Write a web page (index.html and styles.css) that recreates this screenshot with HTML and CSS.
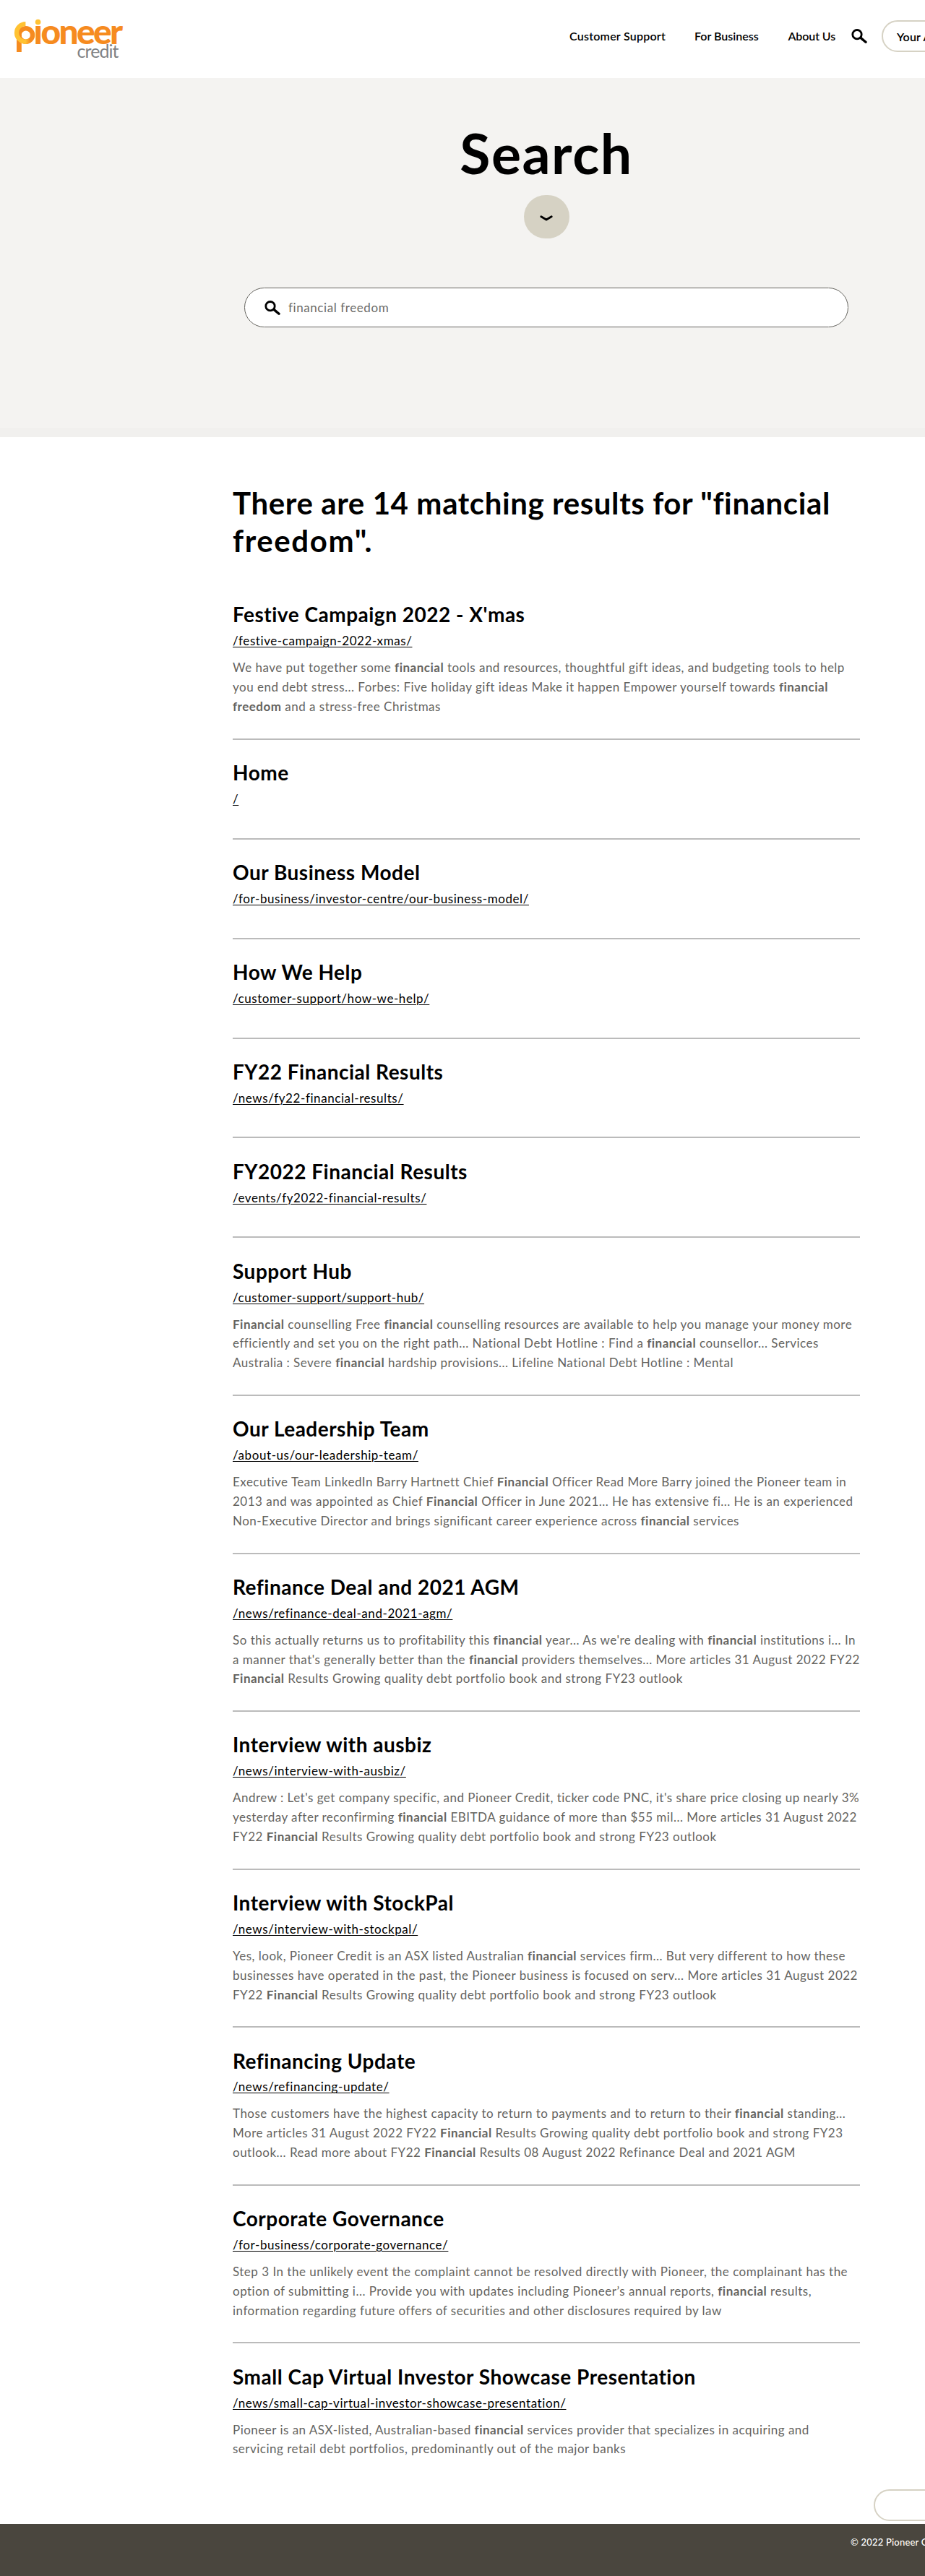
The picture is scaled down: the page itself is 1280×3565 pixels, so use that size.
FILE: index.html
```html
<!DOCTYPE html>
<html lang="en">
<head>
<meta charset="utf-8">
<title>Search - Pioneer Credit</title>
<link rel="stylesheet" href="styles.css">
</head>
<body>
<svg class="sprite" aria-hidden="true">
  <symbol id="magnifier" viewBox="0 0 22 20">
    <circle cx="8" cy="7.7" r="6.2" fill="none" stroke="#000" stroke-width="2.8"/>
    <path d="M13 12.4 L20 18.2" fill="none" stroke="#000" stroke-width="3.4" stroke-linecap="round"/>
  </symbol>
</svg>
<div class="page">
  <header class="header">
    <a class="logo" aria-label="Pioneer Credit">
      <svg width="152" height="56" viewBox="19 26 152 56">
        <defs><linearGradient id="fade" x1="20" x2="42" y1="0" y2="0" gradientUnits="userSpaceOnUse"><stop offset=".7" stop-color="#ffc233"/><stop offset="1" stop-color="#f68b1f"/></linearGradient></defs>
        <rect x="23" y="48" width="6.8" height="24" fill="#f68b1f"/>
        <circle cx="35.8" cy="48.5" r="9.3" fill="none" stroke="#f68b1f" stroke-width="6.4"/>
        <path d="M35.4 33 A12.4 12.4 0 0 0 35.4 57.8 Q38.5 57.8 41 56.2" fill="none" stroke="url(#fade)" stroke-width="6.2"/>
        <text class="logo-name" x="46.6" y="60.6" textLength="123.6">ıoneer</text>
        <circle cx="52.6" cy="30.5" r="3.8" fill="#ffc233"/>
        <text class="logo-sub" x="106.5" y="79.6" textLength="58">credit</text>
      </svg>
    </a>
    <nav class="nav">
      <a>Customer Support</a>
      <a>For Business</a>
      <a>About Us</a>
    </nav>
    <svg class="icon nav-icon"><use href="#magnifier"/></svg>
    <a class="pill account">Your Account</a>
  </header>

  <section class="hero">
    <h1>Search</h1>
    <a class="down"><svg width="18" height="8" viewBox="0 0 18 8"><path d="M1.8 1.8 L9 6 L16.2 1.8" fill="none" stroke="#000" stroke-width="2.8" stroke-linecap="round" stroke-linejoin="round"/></svg></a>
    <div class="searchbox">
      <svg class="icon"><use href="#magnifier"/></svg>
      <span>financial freedom</span>
    </div>
  </section>

  <main class="results">
    <h2>There are 14 matching results for "financial<br><span class="wide">freedom".</span></h2>

    <article class="result">
      <h3>Festive Campaign 2022 - X'mas</h3>
      <a>/festive-campaign-2022-xmas/</a>
      <p>We have put together some <b>financial</b> tools and resources, thoughtful gift ideas, and budgeting tools to help<br>you end debt stress... Forbes: Five holiday gift ideas Make it happen Empower yourself towards <b>financial</b><br><b>freedom</b> and a stress-free Christmas</p>
    </article>
    <article class="result">
      <h3>Home</h3>
      <a>/</a>
      <p></p>
    </article>
    <article class="result">
      <h3>Our Business Model</h3>
      <a>/for-business/investor-centre/our-business-model/</a>
      <p></p>
    </article>
    <article class="result">
      <h3>How We Help</h3>
      <a>/customer-support/how-we-help/</a>
      <p></p>
    </article>
    <article class="result">
      <h3>FY22 Financial Results</h3>
      <a>/news/fy22-financial-results/</a>
      <p></p>
    </article>
    <article class="result">
      <h3>FY2022 Financial Results</h3>
      <a>/events/fy2022-financial-results/</a>
      <p></p>
    </article>
    <article class="result">
      <h3>Support Hub</h3>
      <a>/customer-support/support-hub/</a>
      <p><b>Financial</b> counselling Free <b>financial</b> counselling resources are available to help you manage your money more<br>efficiently and set you on the right path... National Debt Hotline : Find a <b>financial</b> counsellor... Services<br>Australia : Severe <b>financial</b> hardship provisions... Lifeline National Debt Hotline : Mental</p>
    </article>
    <article class="result">
      <h3>Our Leadership Team</h3>
      <a>/about-us/our-leadership-team/</a>
      <p>Executive Team LinkedIn Barry Hartnett Chief <b>Financial</b> Officer Read More Barry joined the Pioneer team in<br>2013 and was appointed as Chief <b>Financial</b> Officer in June 2021... He has extensive fi... He is an experienced<br>Non-Executive Director and brings significant career experience across <b>financial</b> services</p>
    </article>
    <article class="result">
      <h3>Refinance Deal and 2021 AGM</h3>
      <a>/news/refinance-deal-and-2021-agm/</a>
      <p>So this actually returns us to profitability this <b>financial</b> year... As we're dealing with <b>financial</b> institutions i... In<br>a manner that's generally better than the <b>financial</b> providers themselves... More articles 31 August 2022 FY22<br><b>Financial</b> Results Growing quality debt portfolio book and strong FY23 outlook</p>
    </article>
    <article class="result">
      <h3>Interview with ausbiz</h3>
      <a>/news/interview-with-ausbiz/</a>
      <p>Andrew : Let's get company specific, and Pioneer Credit, ticker code PNC, it's share price closing up nearly 3%<br>yesterday after reconfirming <b>financial</b> EBITDA guidance of more than $55 mil... More articles 31 August 2022<br>FY22 <b>Financial</b> Results Growing quality debt portfolio book and strong FY23 outlook</p>
    </article>
    <article class="result">
      <h3>Interview with StockPal</h3>
      <a>/news/interview-with-stockpal/</a>
      <p>Yes, look, Pioneer Credit is an ASX listed Australian <b>financial</b> services firm... But very different to how these<br>businesses have operated in the past, the Pioneer business is focused on serv... More articles 31 August 2022<br>FY22 <b>Financial</b> Results Growing quality debt portfolio book and strong FY23 outlook</p>
    </article>
    <article class="result">
      <h3>Refinancing Update</h3>
      <a>/news/refinancing-update/</a>
      <p>Those customers have the highest capacity to return to payments and to return to their <b>financial</b> standing...<br>More articles 31 August 2022 FY22 <b>Financial</b> Results Growing quality debt portfolio book and strong FY23<br>outlook... Read more about FY22 <b>Financial</b> Results 08 August 2022 Refinance Deal and 2021 AGM</p>
    </article>
    <article class="result">
      <h3>Corporate Governance</h3>
      <a>/for-business/corporate-governance/</a>
      <p>Step 3 In the unlikely event the complaint cannot be resolved directly with Pioneer, the complainant has the<br>option of submitting i... Provide you with updates including Pioneer’s annual reports, <b>financial</b> results,<br>information regarding future offers of securities and other disclosures required by law</p>
    </article>
    <article class="result">
      <h3>Small Cap Virtual Investor Showcase Presentation</h3>
      <a>/news/small-cap-virtual-investor-showcase-presentation/</a>
      <p>Pioneer is an ASX-listed, Australian-based <b>financial</b> services provider that specializes in acquiring and<br>servicing retail debt portfolios, predominantly out of the major banks</p>
    </article>
  </main>

  <div class="more"><a class="pill"></a></div>
  <footer class="footer">© 2022 Pioneer Credit</footer>
</div>
</body>
</html>
```
FILE: styles.css
```css
* { box-sizing: border-box; }
html { overflow: hidden; }
body { margin: 0; background: #fff; color: #000; font-family: Lato, "Open Sans", sans-serif; }
h1, h2, h3, p { margin: 0; }
.sprite { display: none; }
.page { width: 1512px; }

.header { display: flex; align-items: center; height: 108px; padding: 0 0 8px 19px; }
.logo { display: block; height: 56px; margin-top: 8px; }
.logo svg { overflow: visible; }
.logo-name { font: 900 48px Lato, sans-serif; fill: #f68b1f; }
.logo-sub { font: 400 25px Lato, sans-serif; fill: #808285; }
.nav { display: flex; gap: 40px; margin-left: 617px; font-size: 16px; font-weight: 600; line-height: 24px; white-space: nowrap; }
.nav a:nth-child(1) { width: 133px; letter-spacing: .24px; }
.nav a:nth-child(2) { width: 89.5px; }
.nav a:nth-child(3) { width: 66px; letter-spacing: -.1px; }
.icon { display: block; flex: none; width: 22px; height: 20px; }
.nav-icon { margin-left: 21.5px; }
.pill { display: flex; align-items: center; height: 44px; border: 2px solid #d6d2c4; border-radius: 22px; }
.account { width: 150px; margin-left: 20px; padding-left: 19px; font-size: 16px; font-weight: 600; white-space: nowrap; letter-spacing: .2px; }

.hero { display: flex; flex-direction: column; align-items: center; height: 497px; padding-top: 58px; background: linear-gradient(#f4f3f1 0 97.3%, #f1f0ee 97.3%); }
.hero h1 { font-size: 77px; line-height: 90px; font-weight: 700; letter-spacing: 1.5px; }
.down { display: flex; align-items: center; justify-content: center; width: 63px; height: 60px; margin-top: 14px; padding-top: 4px; border-radius: 30px; background: #d6d2c4; }
.searchbox { display: flex; align-items: center; gap: 11px; width: 836px; height: 55px; margin-top: 68px; padding-left: 27px; border: 1px solid #65645f; border-radius: 28px; background: #fff; color: #6c6b67; font-size: 17px; letter-spacing: .58px; }

.results { width: 868px; margin: 0 auto; padding-top: 64.5px; }
.results h2 { margin-bottom: 30px; font-size: 42px; line-height: 52.8px; font-weight: 700; letter-spacing: .6px; white-space: nowrap; }
.results .wide { letter-spacing: 1.6px; }
.result { padding: 28.2px 0 29.9px; border-bottom: 2px solid #bbb; }
.result:last-child { padding-bottom: 0; border-bottom: 0; }
.result h3 { margin-bottom: 6.9px; font-size: 28px; line-height: 34px; font-weight: 700; letter-spacing: .5px; }
.result a { display: block; width: max-content; font-size: 17px; line-height: 26.8px; letter-spacing: .58px; text-decoration: underline; text-decoration-thickness: 1px; text-underline-offset: 2px; }
.result p { padding-top: 10.2px; color: #65645f; font-size: 17px; line-height: 26.87px; letter-spacing: .49px; white-space: nowrap; }

.more { padding: 42px 0 4px 1209px; }
.footer { height: 74px; padding: 16px 0 0 1177px; background: #4a463e; color: #fff; font-size: 13px; line-height: 18px; letter-spacing: .2px; font-weight: 500; }
```
